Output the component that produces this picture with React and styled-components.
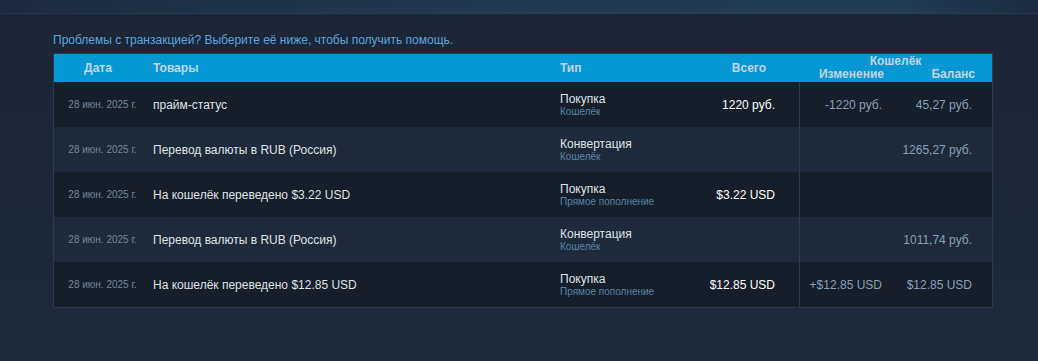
import React from "react";
import styled, { createGlobalStyle } from "styled-components";

const GlobalStyle = createGlobalStyle`
  html, body { margin: 0; padding: 0; }
  body {
    background: #1b2536;
    font-family: "Liberation Sans", Arial, sans-serif;
  }
`;

const Page = styled.div`
  min-height: 361px;
  background: linear-gradient(180deg, #1b2535 0%, #1c2738 60%, #1e2a3b 100%);
`;

const TopBand = styled.div`
  height: 14px;
  background: linear-gradient(90deg, #1c2a3b 0%, #1f3147 20%, #22384f 45%, #213a55 70%, #213a55 88%, #1c2b3d 100%);
  box-shadow: inset 0 -1px 0 rgba(50, 80, 110, 0.35);
`;

const Content = styled.div`
  padding: 18px 0 0 53px;
`;

const HelpText = styled.div`
  font-size: 12px;
  line-height: 16px;
  color: #5ca5de;
  margin-bottom: 5px;
`;

const Table = styled.div`
  width: 940px;
  box-sizing: border-box;
  border: 1px solid #2b3a4c;
`;

const COLS = "99px 407px 130px 109px 92px 101px";

const HeaderRow = styled.div`
  display: grid;
  grid-template-columns: ${COLS};
  height: 28px;
  background: #0598d4;
  color: #c3d3e2;
  font-weight: bold;
  font-size: 12px;
`;

const HeadCell = styled.div`
  display: flex;
  align-items: center;
  justify-content: ${(p) => (p.$align === "center" ? "center" : p.$align === "right" ? "flex-end" : "flex-start")};
  padding-right: ${(p) => p.$pr || 0}px;
`;

const WalletHead = styled.div`
  grid-column: span 2;
  display: grid;
  grid-template-columns: 92px 101px;
  grid-template-rows: 13px 13px;
  padding-top: 1px;
  line-height: 13px;
`;

const WalletTitle = styled.div`
  grid-column: span 2;
  text-align: center;
`;

const WalletSub = styled.div`
  text-align: right;
  padding-right: ${(p) => p.$pr}px;
`;

const Row = styled.div`
  display: grid;
  grid-template-columns: ${COLS};
  height: 45px;
  background: ${(p) => (p.$alt ? "#1e2a39" : "#161e29")};
`;

const Cell = styled.div`
  display: flex;
  flex-direction: column;
  justify-content: center;
  align-items: ${(p) => (p.$align === "center" ? "center" : p.$align === "right" ? "flex-end" : "flex-start")};
  padding-right: ${(p) => p.$pr || 0}px;
  border-left: ${(p) => (p.$divider ? "1px solid #2d3b4d" : "none")};
`;

const DateText = styled.span`
  font-size: 10px;
  color: #74889a;
`;

const ItemText = styled.span`
  font-size: 12px;
  color: #dfe3e6;
`;

const TypeTitle = styled.span`
  font-size: 12px;
  line-height: 14px;
  color: #dfe3e6;
`;

const TypeSub = styled.span`
  font-size: 10px;
  line-height: 12px;
  color: #5b84a5;
`;

const TotalText = styled.span`
  font-size: 12px;
  color: #ffffff;
`;

const WalletText = styled.span`
  font-size: 12px;
  color: #8aa0b6;
`;

const rows = [
  { item: "прайм-статус", type: "Покупка", sub: "Кошелёк", total: "1220 руб.", change: "-1220 руб.", balance: "45,27 руб." },
  { item: "Перевод валюты в RUB (Россия)", type: "Конвертация", sub: "Кошелёк", total: "", change: "", balance: "1265,27 руб." },
  { item: "На кошелёк переведено $3.22 USD", type: "Покупка", sub: "Прямое пополнение", total: "$3.22 USD", change: "", balance: "" },
  { item: "Перевод валюты в RUB (Россия)", type: "Конвертация", sub: "Кошелёк", total: "", change: "", balance: "1011,74 руб." },
  { item: "На кошелёк переведено $12.85 USD", type: "Покупка", sub: "Прямое пополнение", total: "$12.85 USD", change: "+$12.85 USD", balance: "$12.85 USD" },
];

export default function App() {
  return (
    <Page>
      <GlobalStyle />
      <TopBand />
      <Content>
        <HelpText>Проблемы с транзакцией? Выберите её ниже, чтобы получить помощь.</HelpText>
        <Table>
          <HeaderRow>
            <HeadCell $align="center" $pr={11}>Дата</HeadCell>
            <HeadCell>Товары</HeadCell>
            <HeadCell>Тип</HeadCell>
            <HeadCell $align="right" $pr={33}>Всего</HeadCell>
            <WalletHead>
              <WalletTitle>Кошелёк</WalletTitle>
              <WalletSub $pr={7}>Изменение</WalletSub>
              <WalletSub $pr={17}>Баланс</WalletSub>
            </WalletHead>
          </HeaderRow>
          {rows.map((r, i) => (
            <Row key={i} $alt={i % 2 === 1}>
              <Cell $align="center" $pr={2}>
                <DateText>28 июн. 2025 г.</DateText>
              </Cell>
              <Cell>
                <ItemText>{r.item}</ItemText>
              </Cell>
              <Cell>
                <TypeTitle>{r.type}</TypeTitle>
                <TypeSub>{r.sub}</TypeSub>
              </Cell>
              <Cell $align="right" $pr={24}>
                <TotalText>{r.total}</TotalText>
              </Cell>
              <Cell $align="right" $pr={9} $divider>
                <WalletText>{r.change}</WalletText>
              </Cell>
              <Cell $align="right" $pr={20}>
                <WalletText>{r.balance}</WalletText>
              </Cell>
            </Row>
          ))}
        </Table>
      </Content>
    </Page>
  );
}
